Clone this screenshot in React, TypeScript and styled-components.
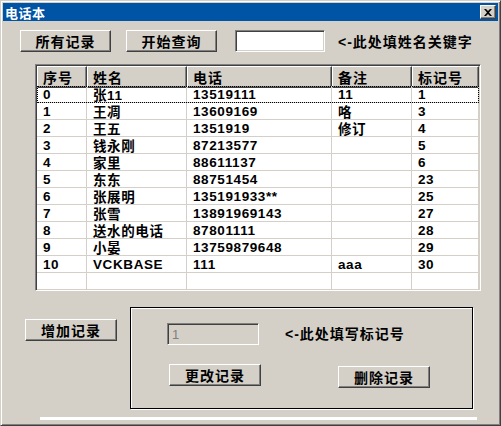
import React from "react"
import styled, { createGlobalStyle } from "styled-components"

const GlobalStyle = createGlobalStyle`
  html, body {
    margin: 0;
    padding: 0;
    background: #d4d0c8;
  }
  * {
    box-sizing: border-box;
  }
`

const font = `"Liberation Sans", "Noto Sans CJK SC", sans-serif`

const Window = styled.div`
  width: 501px;
  height: 426px;
  padding: 2px;
  background: #d4d0c8;
  border: 1px solid;
  border-color: #d4d0c8 #404040 #404040 #d4d0c8;
  box-shadow: inset 1px 1px #fff, inset -1px -1px #808080;
  font-family: ${font};
  display: flex;
  flex-direction: column;
`

const TitleBar = styled.div`
  height: 18px;
  background: #0054a6;
  display: flex;
  align-items: center;
  justify-content: space-between;
  padding: 0 2px 0 2px;
`

const Title = styled.span`
  color: #fff;
  font-weight: bold;
  font-size: 13px;
  letter-spacing: 0.5px;
`

const CloseButton = styled.div`
  width: 16px;
  height: 14px;
  background: #d4d0c8;
  border: 1px solid;
  border-color: #fff #404040 #404040 #fff;
  box-shadow: inset -1px -1px #808080;
  display: flex;
  align-items: center;
  justify-content: center;
`

const Body = styled.div`
  flex: 1;
  display: flex;
  flex-direction: column;
`

const TopRow = styled.div`
  display: flex;
  align-items: center;
  margin-top: 9px;
  padding-left: 17px;
`

const Button = styled.div<{ $w: number; $ml?: number; $mt?: number }>`
  width: ${p => p.$w}px;
  height: 22px;
  margin-left: ${p => p.$ml ?? 0}px;
  margin-top: ${p => p.$mt ?? 0}px;
  flex-shrink: 0;
  background: #d4d0c8;
  border: 1px solid;
  border-color: #fff #404040 #404040 #fff;
  box-shadow: inset -1px -1px #808080;
  display: flex;
  align-items: center;
  justify-content: center;
  font-size: 14px;
  font-weight: bold;
  letter-spacing: 1px;
  color: #000;
`

const Edit = styled.div<{ $w: number; $ml?: number; $disabled?: boolean }>`
  width: ${p => p.$w}px;
  height: 22px;
  margin-left: ${p => p.$ml ?? 0}px;
  flex-shrink: 0;
  background: ${p => (p.$disabled ? "#d4d0c8" : "#fff")};
  border: 1px solid;
  border-color: #808080 #fff #fff #808080;
  box-shadow: inset 1px 1px #404040, inset -1px -1px #d4d0c8;
  display: flex;
  align-items: center;
  padding-left: 4px;
  font-size: 13px;
  color: #808080;
`

const Label = styled.span<{ $ml: number }>`
  margin-left: ${p => p.$ml}px;
  font-size: 14px;
  font-weight: bold;
  letter-spacing: 1px;
  color: #000;
  white-space: nowrap;
`

const ListView = styled.div`
  margin: 12px 0 0 32px;
  width: 446px;
  height: 227px;
  background: #fff;
  border: 1px solid;
  border-color: #808080 #fff #fff #808080;
  box-shadow: inset 1px 1px #404040, inset -1px -1px #d4d0c8;
  padding: 1px;
  overflow: hidden;
`

const columns = "50px 100px 145px 80px 67px"

const HeaderRow = styled.div`
  display: grid;
  grid-template-columns: ${columns};
  height: 20px;
`

const HeaderCell = styled.div`
  background: #d4d0c8;
  border: 1px solid;
  border-color: #fff #404040 #404040 #fff;
  box-shadow: inset -1px -1px #808080;
  display: flex;
  align-items: center;
  padding-left: 5px;
  font-size: 14px;
  font-weight: bold;
  letter-spacing: 1px;
  color: #000;
`

const Row = styled.div<{ $focused?: boolean }>`
  display: grid;
  grid-template-columns: ${columns};
  height: 17px;
  border-bottom: 1px solid #d4d0c8;
  outline: ${p => (p.$focused ? "1px dotted #000" : "none")};
  outline-offset: -1px;
`

const Cell = styled.div`
  border-right: 1px solid #d4d0c8;
  display: flex;
  align-items: center;
  padding-left: 6px;
  font-size: 13.5px;
  font-weight: bold;
  letter-spacing: 0.6px;
  color: #000;
  white-space: nowrap;
  overflow: hidden;
`

const BottomRow = styled.div`
  display: flex;
  align-items: flex-start;
  margin-top: 16px;
  padding-left: 22px;
`

const GroupBox = styled.div`
  width: 343px;
  height: 102px;
  margin-left: 13px;
  border: 1px solid #000;
  box-shadow: 1px 1px 0 #fff, inset 1px 1px 0 #fff;
  display: flex;
  flex-direction: column;
  padding: 15px 0 0 36px;
`

const GroupRow = styled.div<{ $mt?: number }>`
  display: flex;
  align-items: flex-start;
  margin-top: ${p => p.$mt ?? 0}px;
`

const Separator = styled.div`
  margin: 8px 0 0 37px;
  width: 437px;
  height: 3px;
  background: #fff;
`

const rows = [
  ["0", "张11", "13519111", "11", "1"],
  ["1", "王凋", "13609169", "咯", "3"],
  ["2", "王五", "1351919", "修订", "4"],
  ["3", "钱永刚", "87213577", "", "5"],
  ["4", "家里", "88611137", "", "6"],
  ["5", "东东", "88751454", "", "23"],
  ["6", "张展明", "135191933**", "", "25"],
  ["7", "张雪", "13891969143", "", "27"],
  ["8", "送水的电话", "87801111", "", "28"],
  ["9", "小晏", "13759879648", "", "29"],
  ["10", "VCKBASE", "111", "aaa", "30"],
  ["", "", "", "", ""],
]

const headers = ["序号", "姓名", "电话", "备注", "标记号"]

const App = () => (
  <>
    <GlobalStyle />
    <Window>
      <TitleBar>
        <Title>电话本</Title>
        <CloseButton>
          <svg width="8" height="7" viewBox="0 0 8 7">
            <path d="M0 0h2l2 2 2-2h2L5 3.5 8 7H6L4 5 2 7H0l3-3.5z" fill="#000" />
          </svg>
        </CloseButton>
      </TitleBar>
      <Body>
        <TopRow>
          <Button $w={91}>所有记录</Button>
          <Button $w={91} $ml={15}>开始查询</Button>
          <Edit $w={90} $ml={18} />
          <Label $ml={13}>&lt;-此处填姓名关键字</Label>
        </TopRow>
        <ListView>
          <HeaderRow>
            {headers.map(h => (
              <HeaderCell key={h}>{h}</HeaderCell>
            ))}
          </HeaderRow>
          {rows.map((r, i) => (
            <Row key={i} $focused={i === 0}>
              {r.map((c, j) => (
                <Cell key={j}>{c}</Cell>
              ))}
            </Row>
          ))}
        </ListView>
        <BottomRow>
          <Button $w={92} $mt={12}>增加记录</Button>
          <GroupBox>
            <GroupRow>
              <Edit $w={92} $disabled>1</Edit>
              <Label $ml={26} style={{ lineHeight: "22px" }}>&lt;-此处填写标记号</Label>
            </GroupRow>
            <GroupRow $mt={19}>
              <Button $w={92} $ml={2}>更改记录</Button>
              <Button $w={92} $ml={77} $mt={2}>删除记录</Button>
            </GroupRow>
          </GroupBox>
        </BottomRow>
        <Separator />
      </Body>
    </Window>
  </>
)

export default App
